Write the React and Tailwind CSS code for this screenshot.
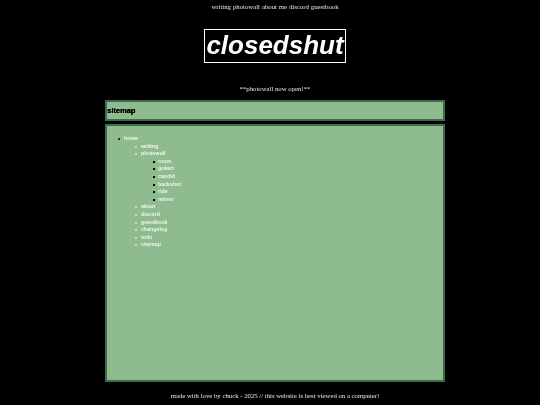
const NAV = ["writing", "photowall", "about me", "discord", "guestbook"];
const ROOMS = ["room", "gokart", "candid", "backshot", "ride", "mirror"];
const AFTER = ["about", "discord", "guestbook", "changelog", "todo", "sitemap"];

const serif = "font-['Liberation_Serif',serif]";
const linkText = "font-['Liberation_Sans',sans-serif] font-bold text-[5.25px] leading-[7.6px] text-[#f0f5ee]";
const disc = "relative before:absolute before:left-[-6.5px] before:top-[2.5px] before:size-[2.5px] before:rounded-full before:bg-black";
const circle = "relative before:absolute before:left-[-6px] before:top-[3px] before:size-[2px] before:rounded-full before:bg-[#d5e5d0]";
const square = "relative before:absolute before:left-[-5.5px] before:top-[3px] before:size-[2px] before:bg-black";

export default function App() {
  return (
    <div className={`h-[405px] w-[540px] overflow-hidden bg-black pl-[10px] flex flex-col items-center will-change-transform ${serif}`}>
      <nav className="mt-[3px] flex gap-[2px] text-[6.75px] leading-[8px] text-[#e8e8e8]">
        {NAV.map(item => <a key={item}>{item}</a>)}
      </nav>

      <div className="mt-[18px] h-[34px] w-[142px] border border-white flex items-center justify-center pb-[2px]">
        <span className="font-['Liberation_Sans',sans-serif] italic font-bold text-[26px] leading-none text-white">closedshut</span>
      </div>

      <p className="mt-[21px] text-[6.75px] leading-[9px] text-[#e8e8e8]">**photowall now open!**</p>

      <header className="mt-[7px] h-[21px] w-[340px] border-2 border-[#3d6b4f] bg-[#8fbc8f] flex items-center">
        <h1 className="font-['Liberation_Sans',sans-serif] font-bold text-[7.5px] text-black [text-shadow:0.3px_0_0_black]">sitemap</h1>
      </header>

      <main className="mt-[3px] h-[258px] w-[340px] border-2 border-[#3d6b4f] bg-[#8fbc8f] pt-[9px] pl-[17px]">
        <ul className={linkText}>
          <li className={disc}>
            home
            <ul className="pl-[17px]">
              <li className={circle}>writing</li>
              <li className={circle}>
                photowall
                <ul className="pl-[17px]">
                  {ROOMS.map(room => <li key={room} className={square}>{room}</li>)}
                </ul>
              </li>
              {AFTER.map(item => <li key={item} className={circle}>{item}</li>)}
            </ul>
          </li>
        </ul>
      </main>

      <footer className="mt-[10px] text-[6.75px] leading-[8px] text-[#e8e8e8]">
        made with love by chuck - 2025 // this website is best viewed on a computer!
      </footer>
    </div>
  );
}
